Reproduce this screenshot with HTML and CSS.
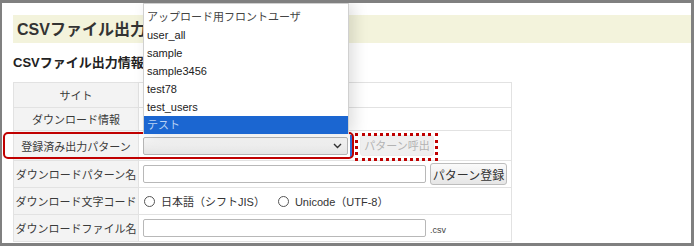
FILE: index.html
```html
<!DOCTYPE html>
<html lang="ja">
<head>
    <meta charset="UTF-8">
    <title>CSVファイル出力</title>
    <link rel="stylesheet" href="styles.css">
</head>
<body>
    <div class="frame">
        <h1 class="page-title">CSVファイル出力</h1>
        <h2 class="section-title">CSVファイル出力情報</h2>

        <table class="form-table">
            <tr class="row-site">
                <th>サイト</th>
                <td></td>
            </tr>
            <tr class="row-info">
                <th>ダウンロード情報</th>
                <td></td>
            </tr>
            <tr class="row-pattern">
                <th>登録済み出力パターン</th>
                <td>
                    <div class="select-wrap">
                        <div class="select-box">
                            <svg class="chevron" width="9" height="6" viewBox="0 0 9 6"><path d="M1 1l3.5 3.5L8 1" fill="none" stroke="#333" stroke-width="1.4"/></svg>
                        </div>
                        <span class="focus-bar"></span>
                        <ul class="option-list">
                            <li class="jp">アップロード用フロントユーザ</li>
                            <li>user_all</li>
                            <li>sample</li>
                            <li>sample3456</li>
                            <li>test78</li>
                            <li>test_users</li>
                            <li class="jp selected">テスト</li>
                        </ul>
                        <button class="btn" disabled>パターン呼出</button>
                    </div>
                </td>
            </tr>
            <tr>
                <th>ダウンロードパターン名</th>
                <td>
                    <div class="field-line">
                        <input type="text" class="text-input">
                        <button class="btn">パターン登録</button>
                    </div>
                </td>
            </tr>
            <tr>
                <th>ダウンロード文字コード</th>
                <td>
                    <div class="field-line radios">
                        <label><span class="radio"></span>日本語（シフトJIS）</label>
                        <label><span class="radio"></span>Unicode（UTF-8）</label>
                    </div>
                </td>
            </tr>
            <tr>
                <th>ダウンロードファイル名</th>
                <td>
                    <div class="field-line">
                        <input type="text" class="text-input">
                        <span class="ext">.csv</span>
                    </div>
                </td>
            </tr>
        </table>

        <!-- annotation marks drawn over the screenshot -->
        <div class="mark-solid"></div>
        <div class="mark-dotted"></div>
    </div>
</body>
</html>
```

FILE: styles.css
```css
body {
    margin: 0;
    background-color: #fff;
    font-family: "Liberation Sans", "Noto Sans CJK JP", sans-serif;
    color: #333;
}

.frame {
    position: relative;
    width: 694px;
    height: 246px;
    box-sizing: border-box;
    border: 3px solid #808080;
    border-left-width: 2px;
    padding: 12px 0 0 11px;
    overflow: hidden;
}

.page-title {
    margin: 0;
    height: 28px;
    line-height: 29px;
    padding-left: 4px;
    background-color: #f3f3dc;
    font-size: 16px;
    font-weight: bold;
    color: #333;
}

.section-title {
    margin: 11px 0 0 0;
    font-size: 13px;
    font-weight: bold;
    line-height: 18px;
    color: #222;
}

.form-table {
    margin-top: 10px;
    width: 499px;
    border-collapse: collapse;
    border: 1px solid #dcdcdc;
    font-size: 11px;
}

.form-table th {
    width: 124px;
    padding: 0;
    background-color: #f3f3f3;
    font-weight: normal;
    text-align: center;
    color: #3a3a3a;
    border: 1px solid #e2e2e2;
}

.form-table td {
    padding: 0 0 0 4px;
    border: 1px solid #e2e2e2;
    background-color: #fff;
}

.form-table tr {
    height: 27px;
}

.form-table .row-site {
    height: 25px;
}

.form-table .row-info {
    height: 23px;
}

.form-table .row-pattern {
    height: 30px;
}

.select-wrap {
    position: relative;
    display: flex;
    align-items: center;
}

.select-box {
    width: 198px;
    height: 16px;
    border: 1px solid #b5b5b5;
    border-radius: 2px;
    background: linear-gradient(#f7f7f7, #e4e4e4);
    display: flex;
    justify-content: flex-end;
    align-items: center;
    padding-right: 5px;
    box-sizing: content-box;
}

.focus-bar {
    width: 2px;
    height: 22px;
    margin-left: 2px;
    background-color: #2f6fd6;
}

.option-list {
    position: absolute;
    left: 0;
    bottom: 100%;
    margin: 0 0 1px 0;
    padding: 4px 0 0 0;
    width: 204px;
    list-style: none;
    background-color: #fff;
    border: 1px solid #d0d0d0;
    border-bottom: none;
    box-shadow: 5px 0 14px rgba(0, 0, 0, 0.13);
    font-size: 11px;
    z-index: 2;
}

.option-list li {
    height: 18px;
    line-height: 18px;
    padding-left: 3px;
    color: #222;
}

.option-list .jp {
    color: #444;
}

.option-list .selected {
    background-color: #1b66d1;
    color: #b9d2f4;
}

.btn {
    font-family: "Noto Sans CJK JP", "Liberation Sans", sans-serif;
    font-size: 12px;
    height: 21px;
    padding: 0 5px;
    border: 1px solid #bdbdbd;
    border-radius: 3px;
    background: linear-gradient(#fafafa, #e6e6e6);
    color: #333;
    line-height: 19px;
    white-space: nowrap;
}

.btn:disabled {
    margin-left: 8px;
    width: 74px;
    padding: 0;
    font-size: 11px;
    border-color: #ececec;
    background: #efefef;
    color: #b3b3b3;
}

.field-line {
    display: flex;
    align-items: center;
    gap: 4px;
}

.text-input {
    width: 281px;
    height: 16px;
    padding: 0;
    margin: 0;
    border: 1px solid #b8b8b8;
    border-radius: 2px;
    background-color: #fff;
}

.field-line .btn {
    height: 22px;
    width: 77px;
    padding: 0;
}

.radios {
    gap: 12px;
    font-size: 11px;
}

.radios label {
    display: flex;
    align-items: center;
    gap: 6px;
    color: #333;
}

.radio {
    display: inline-block;
    width: 9px;
    height: 9px;
    border: 1px solid #555;
    border-radius: 50%;
    margin-left: 1px;
}

.ext {
    font-size: 9px;
    color: #444;
    padding-top: 3px;
}

.mark-solid {
    position: absolute;
    left: 1px;
    top: 129px;
    width: 347px;
    height: 23px;
    border: 2px solid #c00000;
    border-radius: 5px;
}

.mark-dotted {
    position: absolute;
    left: 353px;
    top: 130px;
    width: 77px;
    height: 22px;
    border: 3px dotted #c00000;
}
```
